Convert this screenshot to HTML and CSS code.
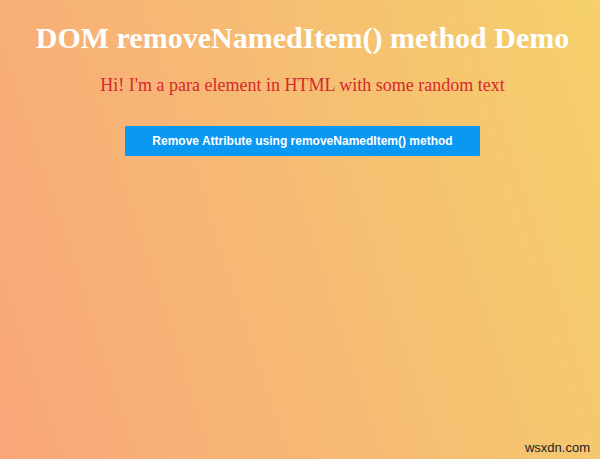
FILE: index.html
```html
<!DOCTYPE html>
<html>
<head>
<meta charset="utf-8">
<link rel="stylesheet" href="styles.css">
</head>
<body>
<div class="page">
  <h1 class="title">DOM removeNamedItem() method Demo</h1>
  <p class="para">Hi! I'm a para element in HTML with some random text</p>
  <button class="btn">Remove Attribute using removeNamedItem() method</button>
</div>
<div class="mark">wsxdn.com</div>
</body>
</html>
```
FILE: styles.css
```css
html, body {
  margin: 0;
  padding: 0;
  width: 600px;
  height: 459px;
  overflow: hidden;
}
body {
  background: linear-gradient(72deg, #f9a67a 0%, #f6bb73 50%, #f5d06b 100%);
  font-family: "Liberation Serif", serif;
  position: relative;
}
.page {
  display: flex;
  flex-direction: column;
  align-items: center;
  padding-top: 21px;
  padding-left: 5px;
}
.title {
  margin: 0;
  color: #ffffff;
  font-size: 30px;
  font-weight: bold;
  line-height: 34px;
}
.para {
  margin: 20px 0 0 0;
  color: #d7282f;
  font-size: 18px;
  line-height: 20px;
}
.btn {
  margin-top: 31px;
  width: 355px;
  height: 30px;
  background: #0a98f2;
  color: #ffffff;
  border: none;
  border-radius: 1px;
  font-family: "Liberation Sans", Arial, sans-serif;
  font-weight: bold;
  font-size: 12px;
  padding: 0;
}
.mark {
  position: absolute;
  right: 10px;
  bottom: 4px;
  font-family: "Liberation Sans", Arial, sans-serif;
  font-size: 13px;
  color: #222;
}
```
